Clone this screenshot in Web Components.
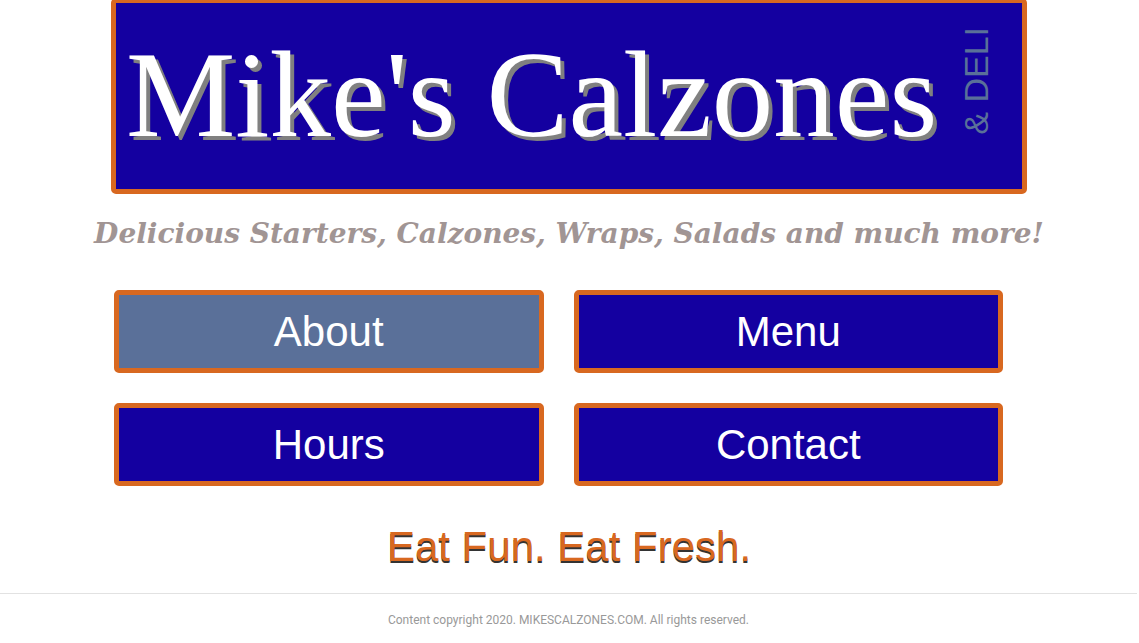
<!DOCTYPE html>
<html lang="en">
<head>
<meta charset="utf-8">
<meta name="viewport" content="width=device-width, initial-scale=1">
<title>Mike's Calzones</title>
<style>
html { background: #fff; }
body {
  margin: 0 1px 0 0;
  font-family: "Liberation Sans", Arial, sans-serif;
  --navy: #1400a0;
  --orange: #d86820;
  --steel: #5a7099;
  --taupe: #a19594;
}
</style>
</head>
<body>
<calzone-page>
  <brand-header slot="header">Mike's Calzones<span slot="aside">&amp; DELI</span></brand-header>
  <tag-line>Delicious Starters, Calzones, Wraps, Salads and much more!</tag-line>
  <main-menu>
    <menu-button href="#about" current>About</menu-button>
    <menu-button href="#menu">Menu</menu-button>
    <menu-button href="#hours">Hours</menu-button>
    <menu-button href="#contact">Contact</menu-button>
  </main-menu>
  <page-slogan>Eat Fun. Eat Fresh.</page-slogan>
  <page-footer slot="footer">Content copyright 2020. MIKESCALZONES.COM. All rights reserved.</page-footer>
</calzone-page>
<script>
const define = (name, html, setup) => {
  const template = document.createElement('template');
  template.innerHTML = html;
  customElements.define(name, class extends HTMLElement {
    constructor() {
      super();
      this.attachShadow({ mode: 'open' }).append(template.content.cloneNode(true));
    }
    connectedCallback() {
      if (setup) setup(this);
    }
  });
};

define('calzone-page', `
  <style>
    :host { display: flex; flex-direction: column; }
    main { display: flex; flex-direction: column; }
  </style>
  <slot name="header"></slot>
  <main><slot></slot></main>
  <slot name="footer"></slot>`);

define('brand-header', `
  <style>
    :host { display: block; }
    header {
      box-sizing: border-box; max-width: 916px; min-height: 196px;
      margin: -2px auto 0; padding: 0 28px 0 10px;
      display: flex; justify-content: space-between; align-items: flex-start;
      border: 5px solid var(--orange); border-radius: 5px;
      background: var(--navy);
    }
    h1 {
      margin: 0; padding-top: 22px;
      font: 400 123px/140px "Liberation Serif", "Times New Roman", serif;
      color: #fff; text-shadow: 4px 4px 0 #808080; white-space: nowrap;
    }
    p {
      margin: 0; padding-bottom: 24px;
      font-size: 34px; line-height: 36px; color: var(--steel);
      writing-mode: vertical-rl; transform: rotate(180deg); white-space: nowrap;
    }
  </style>
  <header><h1><slot></slot></h1><p><slot name="aside"></slot></p></header>`);

define('tag-line', `
  <style>
    :host { display: block; }
    h2 {
      margin: 0; padding-top: 20px; text-align: center;
      font: italic 700 28px/40px "DejaVu Serif", serif; color: var(--taupe);
    }
  </style>
  <h2><slot></slot></h2>`);

define('main-menu', `
  <style>
    :host { display: block; }
    nav {
      box-sizing: border-box; max-width: 910px; margin: 36px auto 0; padding-right: 21px;
      display: grid; grid-template-columns: 1fr 1fr; gap: 30px;
    }
  </style>
  <nav><slot></slot></nav>`);

define('menu-button', `
  <style>
    :host { display: block; }
    a {
      box-sizing: border-box; display: block; padding: 13px 10px 12px;
      border: 5px solid var(--orange); border-radius: 5px;
      background: var(--navy); color: #fff; text-decoration: none;
      text-align: center; font-size: 42px; line-height: 48px;
    }
    :host([current]) a, a:hover { background: var(--steel); }
  </style>
  <a><slot></slot></a>`, el => {
    const link = el.shadowRoot.querySelector('a');
    link.href = el.getAttribute('href');
    if (el.hasAttribute('current')) link.setAttribute('aria-current', 'page');
  });

define('page-slogan', `
  <style>
    :host { display: block; }
    p {
      margin: 37px 0 0; text-align: center;
      font-size: 42px; line-height: 48px; color: var(--orange);
      text-shadow: 0 2px 0 #333;
    }
  </style>
  <p><slot></slot></p>`);

define('page-footer', `
  <style>
    :host { display: block; }
    footer {
      margin: 22px 1px 0 0; padding: 16px 0 14px; border-top: 1px solid #e2e2e2;
      text-align: center; font: 12px/20px Roboto, "Noto Sans", sans-serif; color: #999;
    }
  </style>
  <footer><slot></slot></footer>`);
</script>
</body>
</html>
